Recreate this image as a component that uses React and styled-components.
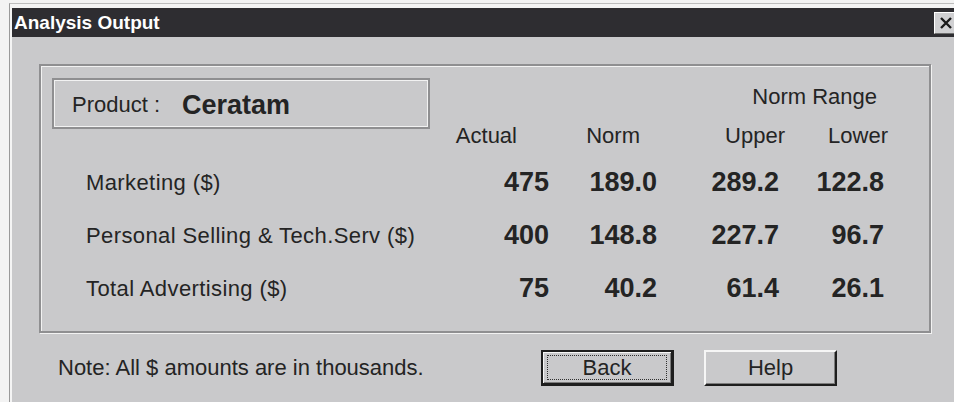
import React from "react";
import styled, { createGlobalStyle } from "styled-components";

const Global = createGlobalStyle`
  html, body {
    margin: 0;
    padding: 0;
    background: #f3f3f3;
    overflow: hidden;
  }
  body {
    font-family: "Liberation Sans", Arial, sans-serif;
    color: #242424;
  }
`;

const Window = styled.div`
  margin: 3px 0 0 9px;
  width: 946px;
  border-top: 1px solid #bdbdbd;
  border-left: 1px solid #9a9a9a;
  padding: 4px 0 0 2px;
  background: #f4f4f4;
`;

const TitleBar = styled.div`
  height: 29px;
  background: #2e2d31;
  display: flex;
  align-items: center;
  justify-content: space-between;
  padding-left: 2px;
  color: #ffffff;
  font-weight: bold;
  font-size: 19px;
`;

const CloseButton = styled.div`
  box-sizing: border-box;
  width: 24px;
  height: 22px;
  background: #d0d0d2;
  border-top: 1px solid #ffffff;
  border-left: 1px solid #ffffff;
  border-right: 1px solid #6e6e6e;
  border-bottom: 1px solid #6e6e6e;
  display: flex;
  align-items: center;
  justify-content: center;
`;

const Body = styled.div`
  background: #c9c9cb;
  height: 365px;
  padding: 27px 0 0 27px;
  box-sizing: border-box;
`;

const GroupBox = styled.div`
  box-sizing: border-box;
  width: 892px;
  height: 269px;
  border: 2px solid #8f8f91;
  box-shadow: inset 1px 1px 0 #f2f2f2, 1px 1px 0 #f2f2f2;
  padding: 12px 0 0 11px;
  display: grid;
  grid-template-columns: 388px 109px 108px 122px 105px;
  grid-template-rows: 38px 40px 53px 53px 53px;
`;

const ProductBox = styled.div`
  grid-column: 1;
  grid-row: 1 / span 2;
  align-self: start;
  box-sizing: border-box;
  width: 378px;
  height: 51px;
  border: 2px solid #8f8f91;
  box-shadow: inset 0 0 0 1px #f2f2f2;
  display: flex;
  align-items: center;
  padding: 3px 0 0 18px;
  font-size: 22px;
`;

const ProductName = styled.span`
  font-weight: bold;
  font-size: 27px;
  margin-left: 22px;
`;

const Header = styled.div`
  grid-column: ${(p) => p.$col};
  grid-row: ${(p) => p.$row};
  ${(p) => (p.$span ? `grid-column-end: span ${p.$span};` : "")}
  justify-self: end;
  align-self: center;
  margin-right: ${(p) => p.$right}px;
  font-size: 22px;
  white-space: nowrap;
`;

const Label = styled.div`
  grid-column: 1;
  align-self: center;
  padding-left: 34px;
  font-size: 22px;
  letter-spacing: 0.4px;
  white-space: nowrap;
`;

const Value = styled.div`
  justify-self: end;
  align-self: center;
  font-weight: bold;
  font-size: 27px;
`;

const Footer = styled.div`
  display: flex;
  align-items: center;
  height: 36px;
  margin-top: 17px;
  padding-left: 19px;
  gap: 30px;
`;

const Note = styled.div`
  flex: 0 0 453px;
  font-size: 22px;
  white-space: nowrap;
`;

const Button = styled.button`
  box-sizing: border-box;
  width: 133px;
  height: 36px;
  font-family: "Liberation Sans", Arial, sans-serif;
  font-size: 22px;
  color: #242424;
  background: #c9c9cb;
  padding: 0;
  position: relative;
  border-style: solid;
  border-width: ${(p) => (p.$default ? "2px 3px 3px 2px" : "2px 2px 2px 2px")};
  border-color: ${(p) =>
    p.$default
      ? "#1e1e1e #1e1e1e #1e1e1e #1e1e1e"
      : "#f6f6f6 #1e1e1e #1e1e1e #f6f6f6"};
  box-shadow: ${(p) =>
    p.$default
      ? "inset 1px 1px 0 #f6f6f6, inset -1px -1px 0 #7d7d7d"
      : "inset -1px -1px 0 #7d7d7d"};
`;

const FocusRing = styled.span`
  position: absolute;
  inset: 3px 4px 3px 4px;
  border: 1px dotted #303030;
  display: flex;
  align-items: center;
  justify-content: center;
`;

const rows = [
  { label: "Marketing ($)", values: ["475", "189.0", "289.2", "122.8"] },
  {
    label: "Personal Selling & Tech.Serv ($)",
    values: ["400", "148.8", "227.7", "96.7"],
  },
  { label: "Total Advertising ($)", values: ["75", "40.2", "61.4", "26.1"] },
];

const headers = [
  { text: "Actual", col: 2, right: 32 },
  { text: "Norm", col: 3, right: 17 },
  { text: "Upper", col: 4, right: -6 },
  { text: "Lower", col: 5, right: -4 },
];

export default function App() {
  return (
    <>
      <Global />
      <Window>
        <TitleBar>
          <span>Analysis Output</span>
          <CloseButton>
            <svg width="14" height="12" viewBox="0 0 14 12">
              <path
                d="M2 1 L12 11 M12 1 L2 11"
                stroke="#1a1a1a"
                strokeWidth="2.4"
                fill="none"
              />
            </svg>
          </CloseButton>
        </TitleBar>
        <Body>
          <GroupBox>
            <ProductBox>
              <span>Product :</span>
              <ProductName>Ceratam</ProductName>
            </ProductBox>
            <Header $col={4} $span={2} $row={1} $right={7}>
              Norm Range
            </Header>
            {headers.map((h) => (
              <Header key={h.text} $col={h.col} $row={2} $right={h.right}>
                {h.text}
              </Header>
            ))}
            {rows.map((r) => (
              <React.Fragment key={r.label}>
                <Label>{r.label}</Label>
                {r.values.map((v, i) => (
                  <Value key={i}>{v}</Value>
                ))}
              </React.Fragment>
            ))}
          </GroupBox>
          <Footer>
            <Note>Note: All $ amounts are in thousands.</Note>
            <Button $default>
              <FocusRing>Back</FocusRing>
            </Button>
            <Button>Help</Button>
          </Footer>
        </Body>
      </Window>
    </>
  );
}
